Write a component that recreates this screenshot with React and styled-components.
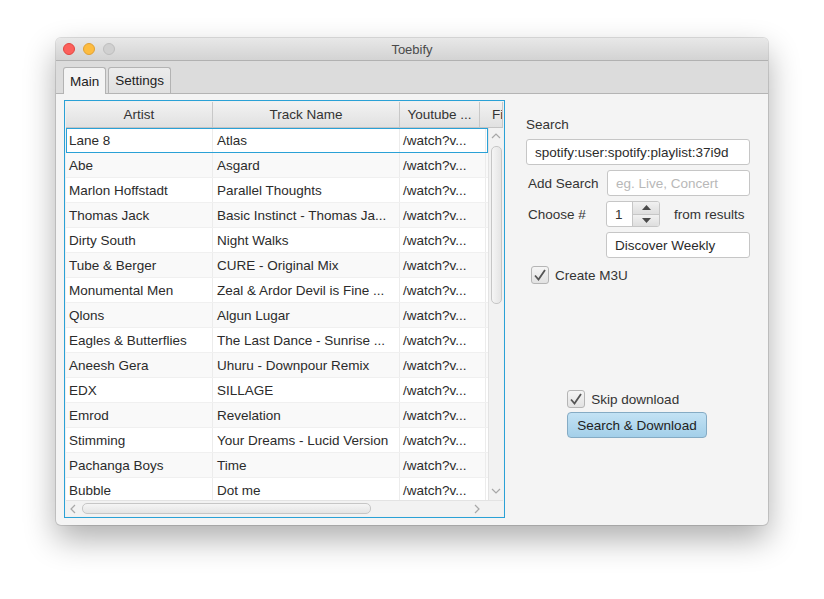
import React from 'react';
import styled, { createGlobalStyle } from 'styled-components';

const Global = createGlobalStyle`
  html, body { margin: 0; padding: 0; background: #ffffff; }
  body { font-family: "Liberation Sans", Arial, sans-serif; font-size: 13.5px; color: #333; }
`;

const Page = styled.div`
  width: 824px;
  height: 599px;
  padding: 38px 0 0 56px;
  box-sizing: border-box;
`;

const Window = styled.div`
  width: 712px;
  height: 487px;
  border-radius: 5px;
  overflow: hidden;
  background: #f4f4f4;
  box-shadow: 0 0 0 1px rgba(0,0,0,0.12), 0 14px 32px rgba(0,0,0,0.32);
  display: flex;
  flex-direction: column;
`;

const TitleBar = styled.div`
  height: 22px;
  display: flex;
  align-items: center;
  position: relative;
  background: linear-gradient(#e8e8e8, #d3d3d3);
  border-bottom: 1px solid #b1b1b1;
  padding-left: 7px;
  gap: 8px;
`;

const Light = styled.span`
  width: 12px;
  height: 12px;
  border-radius: 50%;
  box-sizing: border-box;
  background: ${p => p.$c};
  border: 1px solid ${p => p.$b};
`;

const Title = styled.div`
  position: absolute;
  left: 0;
  right: 0;
  text-align: center;
  color: #4a4a4a;
  font-size: 13px;
`;

const TabStrip = styled.div`
  height: 32px;
  background: #dcdcdc;
  border-bottom: 1px solid #b4b4b4;
  display: flex;
  align-items: flex-end;
  padding-left: 7px;
  gap: 2px;
`;

const Tab = styled.div`
  padding: 0 6px;
  display: flex;
  align-items: center;
  border: 1px solid #b3b3b3;
  border-bottom: none;
  border-radius: 3px 3px 0 0;
  margin-bottom: ${p => (p.$active ? '-1px' : '0')};
  height: ${p => (p.$active ? '26px' : '25px')};
  background: ${p => (p.$active ? '#f4f4f4' : 'linear-gradient(#ececec, #e0e0e0)')};
  color: #222;
`;

const Content = styled.div`
  flex: 1;
  display: flex;
  padding: 6px 0 0 8px;
  gap: 21px;
`;

const TableFrame = styled.div`
  width: 441px;
  height: 418px;
  box-sizing: border-box;
  border: 1px solid #2aa1d6;
  padding: 1px;
  background: #f0f0f0;
  display: flex;
  flex-direction: column;
  overflow: hidden;
`;

const HeaderRow = styled.div`
  height: 25px;
  display: grid;
  grid-template-columns: 147px 187px 80px 1fr;
  background: linear-gradient(#f2f2f2, #e1e1e1);
  border-bottom: 1px solid #c4c4c4;
  flex-shrink: 0;
`;

const HeaderCell = styled.div`
  display: flex;
  align-items: center;
  justify-content: ${p => (p.$left ? 'flex-start' : 'center')};
  padding-left: ${p => (p.$left ? '12px' : '0')};
  border-right: 1px solid #c8c8c8;
  color: #333;
  white-space: nowrap;
  overflow: hidden;
`;

const BodyArea = styled.div`
  flex: 1;
  display: flex;
  min-height: 0;
`;

const Rows = styled.div`
  flex: 1;
  overflow: hidden;
  background: #fff;
`;

const Row = styled.div`
  height: 25px;
  box-sizing: border-box;
  display: grid;
  grid-template-columns: 147px 187px 86px 1fr;
  background: ${p => (p.$odd ? '#f9f9f9' : '#ffffff')};
  border-bottom: 1px solid #f0f0f0;
  outline: ${p => (p.$focus ? '1px solid #2aa1d6' : 'none')};
  outline-offset: -1px;
`;

const Cell = styled.div`
  display: flex;
  align-items: center;
  padding-left: ${p => p.$pad || 3}px;
  border-right: ${p => (p.$last ? 'none' : '1px solid #ececec')};
  white-space: nowrap;
  overflow: hidden;
  color: #2b2b2b;
`;

const VScroll = styled.div`
  width: 15px;
  background: #f2f2f2;
  border-left: 1px solid #e3e3e3;
  display: flex;
  flex-direction: column;
  align-items: center;
  padding: 4px 0 3px;
  box-sizing: border-box;
`;

const VThumb = styled.div`
  width: 11px;
  height: 158px;
  margin-top: 4px;
  border-radius: 5px;
  border: 1px solid #c6c6c6;
  background: linear-gradient(90deg, #f5f5f5, #e4e4e4);
  box-sizing: border-box;
`;

const Spacer = styled.div`
  flex: 1;
`;

const HScroll = styled.div`
  height: 15px;
  flex-shrink: 0;
  display: flex;
  align-items: center;
  background: #f2f2f2;
  border-top: 1px solid #e3e3e3;
  padding: 0 20px 0 3px;
`;

const HThumb = styled.div`
  width: 289px;
  height: 11px;
  margin-left: 3px;
  border-radius: 5px;
  border: 1px solid #c6c6c6;
  background: linear-gradient(#f5f5f5, #e4e4e4);
  box-sizing: border-box;
`;

const Side = styled.div`
  width: 224px;
  display: flex;
  flex-direction: column;
  padding-top: 17px;
`;

const Label = styled.div`
  color: #333;
  line-height: 16px;
`;

const Field = styled.div`
  height: 26px;
  box-sizing: border-box;
  width: ${p => p.$w || 'auto'};
  flex-shrink: 0;
  border: 1px solid #c6c6c6;
  border-radius: 3px;
  background: #fff;
  display: flex;
  align-items: center;
  padding-left: 8px;
  white-space: nowrap;
  overflow: hidden;
  color: ${p => (p.$hint ? '#b8b8b8' : '#2b2b2b')};
`;

const FormRow = styled.div`
  display: flex;
  align-items: center;
  margin-top: ${p => p.$mt || 5}px;
  padding-left: ${p => p.$pl || 0}px;
`;

const RowLabel = styled.div`
  width: ${p => p.$w}px;
  box-sizing: border-box;
  flex-shrink: 0;
  padding-left: ${p => p.$pad || 0}px;
  color: #333;
  white-space: nowrap;
`;

const Spinner = styled.div`
  width: 54px;
  height: 26px;
  flex-shrink: 0;
  display: flex;
  box-sizing: border-box;
  border: 1px solid #c6c6c6;
  border-radius: 3px;
  overflow: hidden;
  background: #fff;
`;

const SpinValue = styled.div`
  flex: 1;
  display: flex;
  align-items: center;
  padding-left: 8px;
`;

const SpinButtons = styled.div`
  width: 26px;
  display: flex;
  flex-direction: column;
  border-left: 1px solid #c6c6c6;
`;

const SpinBtn = styled.div`
  flex: 1;
  display: flex;
  align-items: center;
  justify-content: center;
  background: linear-gradient(#f1f1f1, #dedede);
  border-top: ${p => (p.$bottom ? '1px solid #c6c6c6' : 'none')};
`;

const Check = styled.div`
  display: flex;
  align-items: center;
  gap: 6px;
  color: #333;
`;

const Box = styled.div`
  width: 18px;
  height: 18px;
  box-sizing: border-box;
  border: 1px solid #b5b5b5;
  border-radius: 3px;
  background: linear-gradient(#f5f5f5, #e2e2e2);
  display: flex;
  align-items: center;
  justify-content: center;
`;

const BottomGroup = styled.div`
  margin-top: 106px;
  align-self: center;
  display: flex;
  flex-direction: column;
  gap: 4px;
  margin-left: -2px;
`;

const Button = styled.div`
  height: 26px;
  padding: 0 9px;
  box-sizing: border-box;
  display: flex;
  align-items: center;
  border: 1px solid #85abc4;
  border-radius: 4px;
  background: linear-gradient(#c3e2f4, #a3cfe9);
  color: #222;
  white-space: nowrap;
`;

const Chevron = ({ dir }) => {
  const pts = {
    up: '1,6 5,2 9,6',
    down: '1,2 5,6 9,2',
    left: '6,1 2,5 6,9',
    right: '2,1 6,5 2,9',
  }[dir];
  return (
    <svg width="10" height="10" viewBox="0 0 10 10">
      <polyline points={pts} fill="none" stroke="#a8a8a8" strokeWidth="1.2" />
    </svg>
  );
};

const Tri = ({ down }) => (
  <svg width="9" height="5" viewBox="0 0 9 5">
    <polygon points={down ? '0,0 9,0 4.5,5' : '0,5 9,5 4.5,0'} fill="#4a4a4a" />
  </svg>
);

const Tick = () => (
  <svg width="14" height="14" viewBox="0 0 14 14">
    <polyline points="2,7.5 5.5,11.5 12,2" fill="none" stroke="#555" strokeWidth="1.8" />
  </svg>
);

const tracks = [
  ['Lane 8', 'Atlas'],
  ['Abe', 'Asgard'],
  ['Marlon Hoffstadt', 'Parallel Thoughts'],
  ['Thomas Jack', 'Basic Instinct - Thomas Ja...'],
  ['Dirty South', 'Night Walks'],
  ['Tube & Berger', 'CURE - Original Mix'],
  ['Monumental Men', 'Zeal & Ardor Devil is Fine ...'],
  ['Qlons', 'Algun Lugar'],
  ['Eagles & Butterflies', 'The Last Dance - Sunrise ...'],
  ['Aneesh Gera', 'Uhuru - Downpour Remix'],
  ['EDX', 'SILLAGE'],
  ['Emrod', 'Revelation'],
  ['Stimming', 'Your Dreams - Lucid Version'],
  ['Pachanga Boys', 'Time'],
  ['Bubble', 'Dot me'],
];

export default function App() {
  return (
    <Page>
      <Global />
      <Window>
        <TitleBar>
          <Light $c="#fc605c" $b="#e14640" />
          <Light $c="#fdbc40" $b="#dfa035" />
          <Light $c="#d0d0d0" $b="#bdbdbd" />
          <Title>Toebify</Title>
        </TitleBar>
        <TabStrip>
          <Tab $active>Main</Tab>
          <Tab>Settings</Tab>
        </TabStrip>
        <Content>
          <TableFrame>
            <HeaderRow>
              <HeaderCell>Artist</HeaderCell>
              <HeaderCell>Track Name</HeaderCell>
              <HeaderCell>Youtube ...</HeaderCell>
              <HeaderCell $left>Fi</HeaderCell>
            </HeaderRow>
            <BodyArea>
              <Rows>
                {tracks.map(([a, t], i) => (
                  <Row key={i} $odd={i % 2 === 1} $focus={i === 0}>
                    <Cell>{a}</Cell>
                    <Cell $pad={4}>{t}</Cell>
                    <Cell $pad={3}>/watch?v...</Cell>
                    <Cell $last />
                  </Row>
                ))}
              </Rows>
              <VScroll>
                <Chevron dir="up" />
                <VThumb />
                <Spacer />
                <Chevron dir="down" />
              </VScroll>
            </BodyArea>
            <HScroll>
              <Chevron dir="left" />
              <HThumb />
              <Spacer />
              <Chevron dir="right" />
            </HScroll>
          </TableFrame>
          <Side>
            <Label>Search</Label>
            <FormRow $mt={6}>
              <Field $w="224px">spotify:user:spotify:playlist:37i9d</Field>
            </FormRow>
            <FormRow $pl={2}>
              <RowLabel $w={79}>Add Search</RowLabel>
              <Field $w="143px" $hint>eg. Live, Concert</Field>
            </FormRow>
            <FormRow $pl={2}>
              <RowLabel $w={78}>Choose #</RowLabel>
              <Spinner>
                <SpinValue>1</SpinValue>
                <SpinButtons>
                  <SpinBtn><Tri /></SpinBtn>
                  <SpinBtn $bottom><Tri down /></SpinBtn>
                </SpinButtons>
              </Spinner>
              <RowLabel $w={90} $pad={14}>from results</RowLabel>
            </FormRow>
            <FormRow $pl={80}>
              <Field $w="144px">Discover Weekly</Field>
            </FormRow>
            <FormRow $pl={5} $mt={8}>
              <Check>
                <Box><Tick /></Box>
                Create M3U
              </Check>
            </FormRow>
            <BottomGroup>
              <Check>
                <Box><Tick /></Box>
                Skip download
              </Check>
              <Button>Search &amp; Download</Button>
            </BottomGroup>
          </Side>
        </Content>
      </Window>
    </Page>
  );
}
